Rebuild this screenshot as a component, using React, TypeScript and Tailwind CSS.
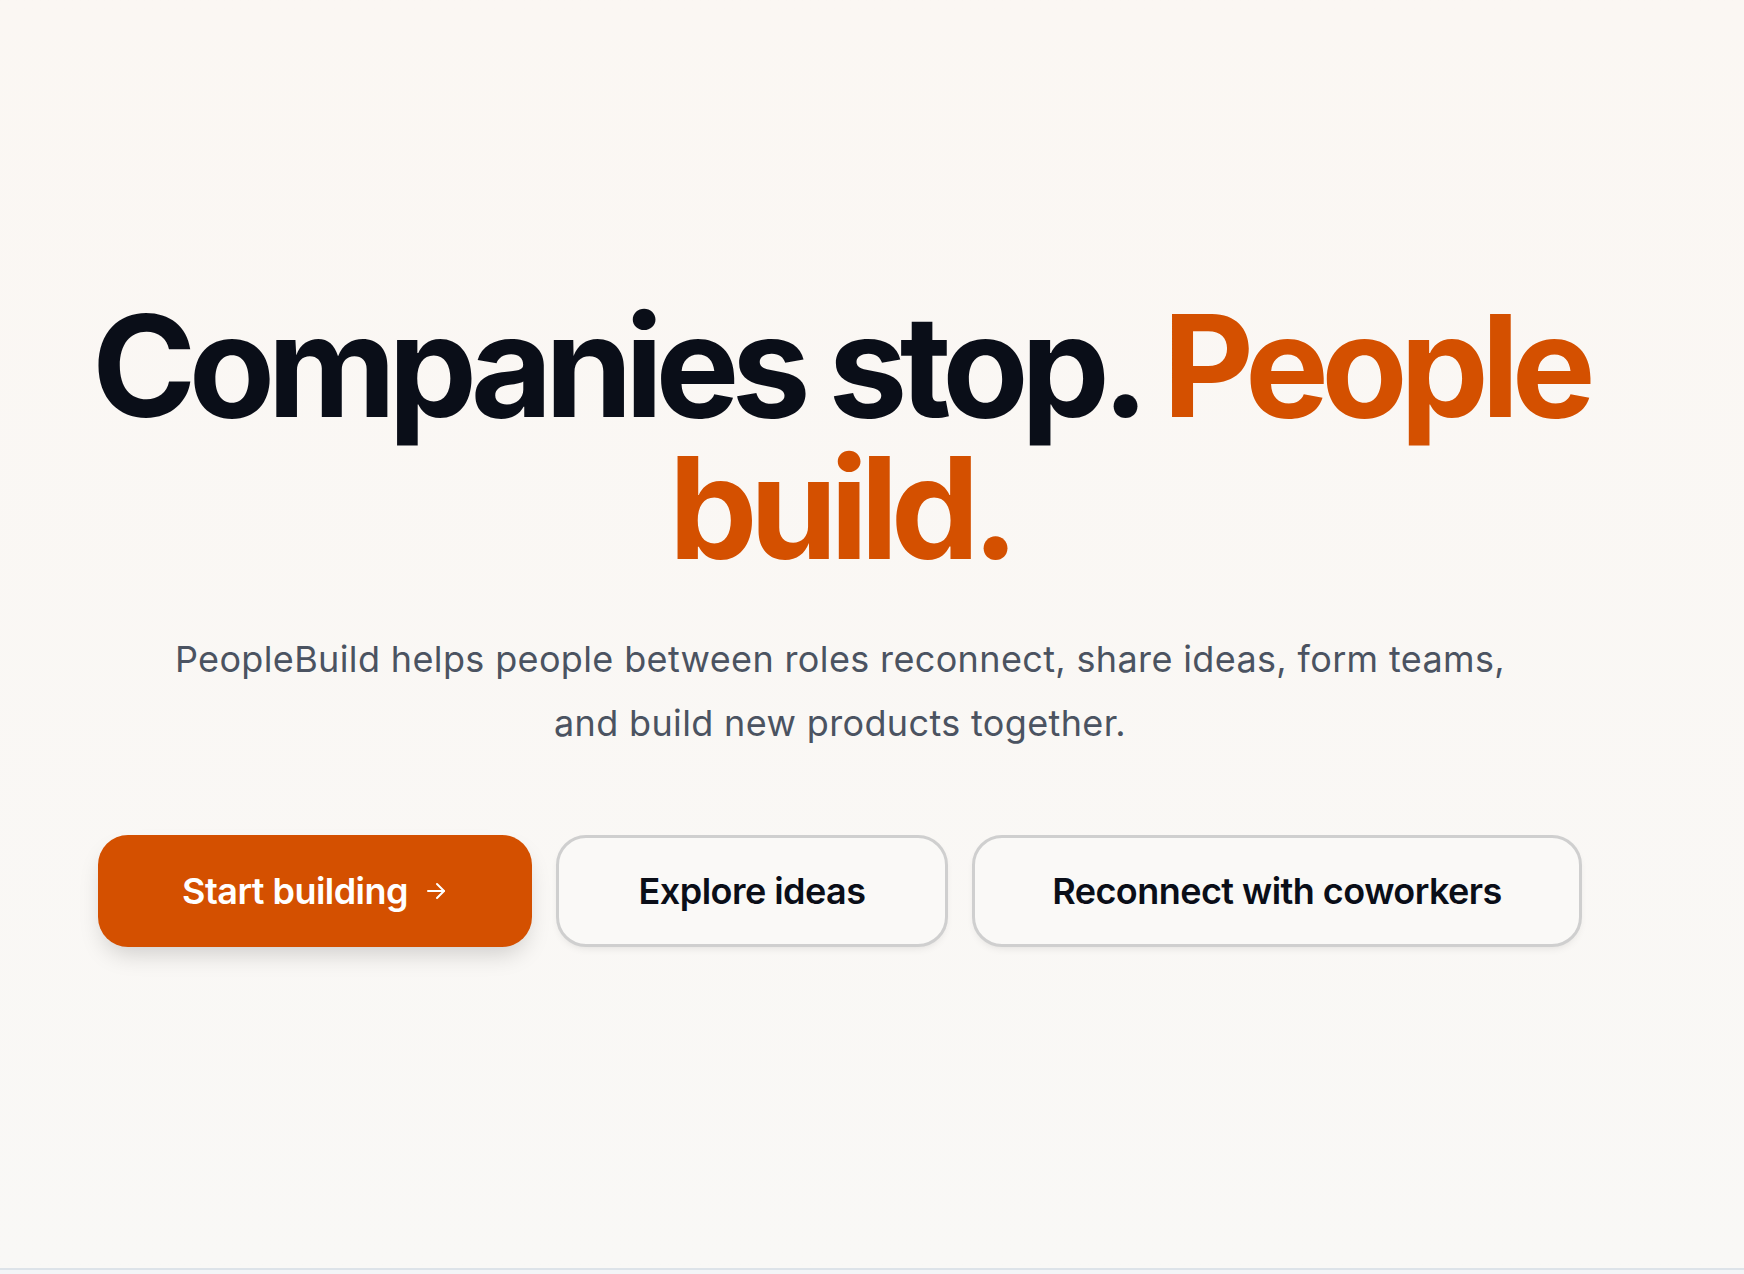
import React from "react";

export default function App() {
  return (
    <div className="min-h-screen bg-[#f3f5f7]" style={{ fontFamily: "Inter, 'Noto Sans', sans-serif" }}>
      <section className="h-[1270px] border-b-2 border-[#dde3e9] bg-gradient-to-b from-[#fbf7f3] to-[#f9f8f6]">
        <div className="ml-[95px] w-[1490px] pt-[295px] flex flex-col items-center text-center">
          <h1 className="whitespace-nowrap text-[141px] leading-[142px] font-bold tracking-[-0.055em] text-[#0a0e18]">
            Companies stop. <span className="text-[#d45000]">People</span>
            <br />
            <span className="text-[#d45000]">build.</span>
          </h1>
          <p className="mt-12 whitespace-nowrap text-[36px] leading-[64px] tracking-[0.01em] text-[#4b5361]">
            PeopleBuild helps people between roles reconnect, share ideas, form teams,
            <br />
            and build new products together.
          </p>
          <div className="mt-20 flex gap-6">
            <button className="h-[112px] w-[434px] rounded-[30px] bg-[#d45000] text-white text-[36px] font-semibold tracking-[-0.015em] flex items-center justify-center gap-4 shadow-[0_12px_24px_-6px_rgba(0,0,0,0.18)]">
              Start building
              <svg width="24" height="24" viewBox="0 0 24 24" fill="none" stroke="currentColor" strokeWidth="2" strokeLinecap="round" strokeLinejoin="round">
                <path d="M4 12h16" />
                <path d="M13 5l7 7-7 7" />
              </svg>
            </button>
            <button className="h-[112px] w-[392px] rounded-[30px] border-[3px] border-[#cfcfcf] bg-[#faf9f7] text-[#0a0e18] text-[36px] font-semibold tracking-[-0.015em] flex items-center justify-center shadow-[0_4px_10px_-4px_rgba(0,0,0,0.12)]">
              Explore ideas
            </button>
            <button className="h-[112px] w-[610px] rounded-[30px] border-[3px] border-[#cfcfcf] bg-[#faf9f7] text-[#0a0e18] text-[36px] font-semibold tracking-[-0.015em] flex items-center justify-center shadow-[0_4px_10px_-4px_rgba(0,0,0,0.12)]">
              Reconnect with coworkers
            </button>
          </div>
        </div>
      </section>
    </div>
  );
}
